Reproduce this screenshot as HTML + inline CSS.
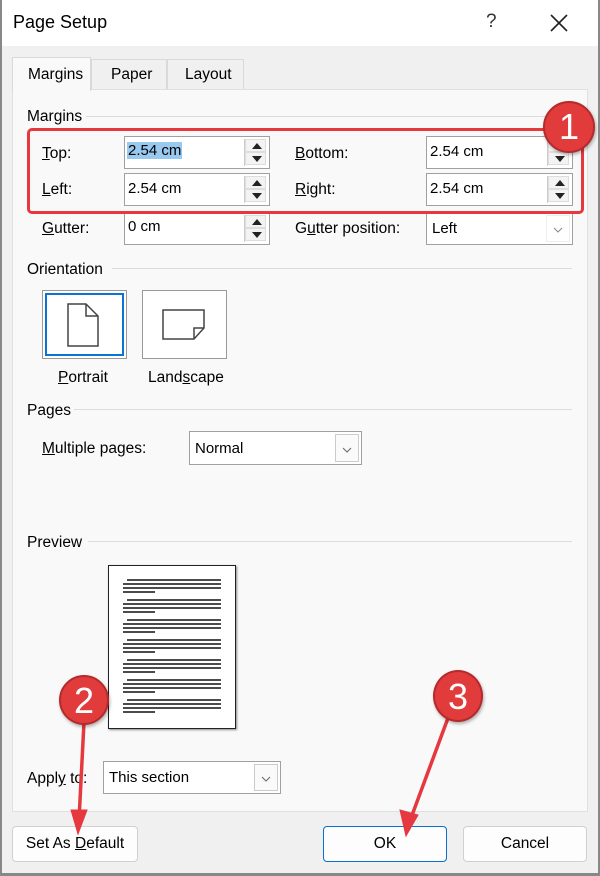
<!DOCTYPE html>
<html><head><meta charset="utf-8"><style>
*{box-sizing:border-box;margin:0;padding:0}
body{width:600px;height:876px;position:relative;background:#f0f0f0;font-family:"Liberation Sans",sans-serif;font-size:15px;color:#000;overflow:hidden}
.a{position:absolute}
.field{position:absolute;background:#fff;border:1px solid #a0a0a0;height:33px}
.field span{position:absolute;left:3px;top:6px;font-size:15px}
.spin{position:absolute;right:3px;top:2px;width:22px;height:27px;border-left:1px solid #ccc}
.spin div{height:13px;background:#f3f3f3;border:1px solid #ddd;position:relative}
.spin div:after{content:"";position:absolute;left:6px;top:3px;border-left:5px solid transparent;border-right:5px solid transparent}
.up:after{border-bottom:6px solid #222}
.dn:after{border-top:6px solid #222}
.lbl{position:absolute;font-size:15.5px}
u{text-decoration:underline}
.hr{position:absolute;height:1px;background:#dcdcdc}
.btn{position:absolute;background:#fdfdfd;border:1px solid #d0d0d0;border-radius:4px;text-align:center;line-height:34px;font-size:15.5px}
.combo{position:absolute;background:#fff;border:1px solid #a0a0a0}
.combo .dd{position:absolute;right:2px;top:2px;bottom:2px;width:24px;border:1px solid #ccc;background:#fafafa}
.badge{position:absolute;border-radius:50%;background:#e23b3b;border:2px solid #b52a2a;color:#fff;font-size:36px;text-align:center;box-shadow:1px 2px 3px rgba(0,0,0,.3)}
</style></head><body>
<div class="a" style="left:0;top:0;width:600px;height:46px;background:#fff"></div>
<div class="a" style="left:13px;top:12px;font-size:18px">Page Setup</div>
<div class="a" style="left:486px;top:11px;font-size:19px;color:#333">?</div>
<svg class="a" style="left:550px;top:14px" width="18" height="18"><path d="M1 1L17 17M17 1L1 17" stroke="#222" stroke-width="1.6"/></svg>
<!-- tabs -->
<div class="a" style="left:91px;top:59px;width:76px;height:31px;background:#f0f0f0;border:1px solid #d9d9d9"></div>
<div class="a" style="left:167px;top:59px;width:77px;height:31px;background:#f0f0f0;border:1px solid #d9d9d9"></div>
<div class="a" style="left:111px;top:66px;font-size:15.5px">Paper</div>
<div class="a" style="left:185px;top:66px;font-size:15.5px">Layout</div>
<div class="a" style="left:12px;top:89px;width:576px;height:723px;background:#f9f9f9;border:1px solid #e0e0e0;border-top:none"></div>
<div class="a" style="left:90px;top:89px;width:498px;height:1px;background:#e0e0e0"></div>
<div class="a" style="left:12px;top:57px;width:79px;height:34px;background:#f9f9f9;border:1px solid #d9d9d9;border-bottom:none"></div>
<div class="a" style="left:28px;top:66px;font-size:15.5px">Margins</div>

<div class="lbl" style="left:27px;top:108px">Margins</div><div class="hr" style="left:86px;top:116px;width:486px"></div>
<div class="lbl" style="left:42px;top:145px"><u>T</u>op:</div>
<div class="lbl" style="left:42px;top:181px"><u>L</u>eft:</div>
<div class="lbl" style="left:42px;top:220px"><u>G</u>utter:</div>
<div class="lbl" style="left:295px;top:145px"><u>B</u>ottom:</div>
<div class="lbl" style="left:295px;top:181px"><u>R</u>ight:</div>
<div class="lbl" style="left:295px;top:220px">G<u>u</u>tter position:</div>

<div class="field" style="left:124px;top:136px;width:146px"><span style="background:#99c9ef;top:5px;left:2px;padding:0 1px">2.54 cm</span><div class="spin"><div class="up"></div><div class="dn"></div></div></div>
<div class="field" style="left:124px;top:173px;width:146px"><span>2.54 cm</span><div class="spin"><div class="up"></div><div class="dn"></div></div></div>
<div class="field" style="left:124px;top:212px;width:146px"><span style="top:5px">0 cm</span><div class="spin"><div class="up"></div><div class="dn"></div></div></div>
<div class="field" style="left:426px;top:136px;width:147px"><span>2.54 cm</span><div class="spin"><div class="up"></div><div class="dn"></div></div></div>
<div class="field" style="left:426px;top:173px;width:147px"><span>2.54 cm</span><div class="spin"><div class="up"></div><div class="dn"></div></div></div>
<div class="combo" style="left:426px;top:212px;width:147px;height:33px"><span class="a" style="left:5px;top:7px">Left</span><div class="dd" style="border-color:#eee;background:#fff"><svg width="22" height="27"><path d="M7 12l4 4 4-4" stroke="#888" fill="none"/></svg></div></div>

<div class="a" style="left:27px;top:128px;width:557px;height:86px;border:3px solid #e5383f;border-radius:5px"></div>
<div class="badge" style="left:543px;top:101px;width:52px;height:52px;line-height:48px">1</div>

<div class="lbl" style="left:27px;top:261px">Orientation</div><div class="hr" style="left:112px;top:268px;width:460px"></div>
<div class="a" style="left:42px;top:290px;width:85px;height:69px;border:1px solid #999;background:#fff"></div>
<div class="a" style="left:45px;top:293px;width:79px;height:63px;border:2px solid #0a74d6"></div>
<svg class="a" style="left:66px;top:303px" width="36" height="46"><path d="M2 1H20L32 13V43H2Z M20 1V13H32" fill="none" stroke="#444" stroke-width="1.5"/></svg>
<div class="a" style="left:142px;top:290px;width:85px;height:69px;border:1px solid #999;background:#fff"></div>
<svg class="a" style="left:161px;top:308px" width="48" height="34"><path d="M2 2H43V20L33 31H2Z M33 31V20H43" fill="none" stroke="#444" stroke-width="1.5"/></svg>
<div class="lbl" style="left:58px;top:369px"><u>P</u>ortrait</div>
<div class="lbl" style="left:148px;top:369px">Land<u>s</u>cape</div>

<div class="lbl" style="left:27px;top:402px">Pages</div><div class="hr" style="left:74px;top:409px;width:498px"></div>
<div class="lbl" style="left:42px;top:440px"><u>M</u>ultiple pages:</div>
<div class="combo" style="left:189px;top:431px;width:173px;height:34px"><span class="a" style="left:5px;top:8px">Normal</span><div class="dd"><svg width="22" height="28"><path d="M7 13l4 4 4-4" stroke="#666" fill="none"/></svg></div></div>

<div class="lbl" style="left:27px;top:534px">Preview</div><div class="hr" style="left:88px;top:541px;width:484px"></div>
<div class="a" style="left:108px;top:565px;width:128px;height:164px;background:#fff;border:1.5px solid #222;box-shadow:1px 1px 2px #888"></div>
<svg class="a" style="left:0;top:0" width="600" height="876">
<g stroke="#111" stroke-width="1.4">
<path d="M127 580H221M123 584H221M123 588H221M123 592H155"/>
<path d="M127 600H221M123 604H221M123 608H221M123 612H155"/>
<path d="M127 620H221M123 624H221M123 628H221M123 632H155"/>
<path d="M127 640H221M123 644H221M123 648H221M123 652H155"/>
<path d="M127 660H221M123 664H221M123 668H221M123 672H155"/>
<path d="M127 680H221M123 684H221M123 688H221M123 692H155"/>
<path d="M127 700H221M123 704H221M123 708H221M123 712H155"/>
</g></svg>

<div class="lbl" style="left:27px;top:770px">Appl<u>y</u> to:</div>
<div class="combo" style="left:103px;top:761px;width:178px;height:33px"><span class="a" style="left:5px;top:7px">This section</span><div class="dd"><svg width="22" height="27"><path d="M7 12l4 4 4-4" stroke="#666" fill="none"/></svg></div></div>

<div class="btn" style="left:12px;top:826px;width:126px;height:36px">Set As <u>D</u>efault</div>
<div class="btn" style="left:323px;top:826px;width:124px;height:36px;border:1px solid #0a6fd0">OK</div>
<div class="btn" style="left:463px;top:826px;width:124px;height:36px">Cancel</div>

<svg class="a" style="left:0;top:0" width="600" height="876">
<g stroke="#e5383f" stroke-width="3.5" fill="#e5383f" stroke-linecap="round">
<path d="M84 722L79 820"/><path d="M71 810L78 834L87 810Z" stroke-width="1"/>
<path d="M448 718L411 818"/><path d="M400 810L406 836L418 815Z" stroke-width="1"/>
</g></svg>
<div class="badge" style="left:59px;top:675px;width:50px;height:50px;line-height:48px">2</div>
<div class="badge" style="left:433px;top:670px;width:50px;height:52px;line-height:50px">3</div>
<div class="a" style="left:0;top:0;width:2px;height:876px;background:#888"></div>
<div class="a" style="left:598px;top:0;width:2px;height:876px;background:#888"></div>
<div class="a" style="left:0;top:873px;width:600px;height:3px;background:#888"></div>
</body></html>
